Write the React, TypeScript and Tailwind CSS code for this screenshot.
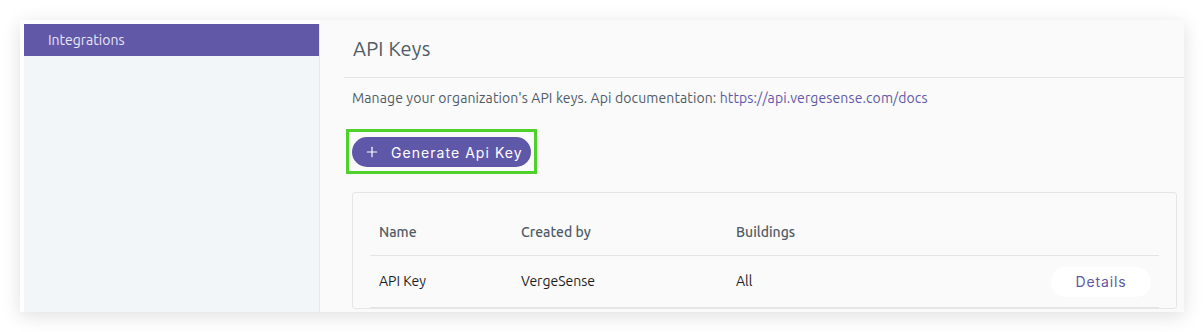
import { Plus } from "lucide-react";

const body = "font-['Ubuntu','Noto_Sans','Open_Sans',sans-serif]";
const geo = "font-['Inter','DejaVu_Sans',sans-serif]";

export default function App() {
  return (
    <div className={`h-[332px] w-[1204px] overflow-hidden bg-white pl-5 pt-5 ${body}`}>
      <div className="flex h-[292px] w-[1164px] bg-white shadow-[0_4px_18px_rgba(0,0,0,0.13)]">
        {/* sidebar */}
        <div className="w-[300px] shrink-0 pl-1 pt-1">
          <div className="h-full border-r border-[#e6e9ec] bg-[#f3f6f8]">
            <div className="flex h-8 items-center bg-[#6159a8] pl-6 text-[14px] text-[#e9e7f7]">
              Integrations
            </div>
          </div>
        </div>

        {/* main */}
        <div className="flex-1 overflow-hidden bg-[#fafafa]">
          <div className="ml-6 flex h-[58px] items-center border-b border-[#e4e4e4] pl-2">
            <h1 className="pl-px text-[20px] tracking-[0.01em] text-[#4f5b66]">API Keys</h1>
          </div>
          <p className="mt-[10px] pl-8 text-[14px] leading-5 tracking-[0.008em] text-[#4f5b66]">
            Manage your organization's API keys. Api documentation:{" "}
            <a className="text-[#5f58a8]">https://api.vergesense.com/docs</a>
          </p>

          <div className="ml-[26px] mt-[21px] inline-flex border-[3px] border-[#4fd12c] px-[3px] pb-[4px] pt-[5px]">
            <button
              className={`flex h-[30px] w-[179px] items-center gap-[11px] rounded-full bg-[#5f57a7] pl-3 text-[14px] tracking-[0.075em] text-white ${geo}`}
            >
              <Plus size={16} strokeWidth={1.8} />
              Generate Api Key
            </button>
          </div>

          {/* table card */}
          <div className="ml-8 mr-[7px] mt-[18px] rounded-[3px] border border-[#e6e6e6] bg-[#fafafa] px-[17px] pt-[16px]">
            <div className="grid h-[47px] grid-cols-[142px_215px_1fr] items-center border-b border-[#e4e4e4] pl-[9px] text-[14px] font-medium text-[#4f5b66]">
              <span>Name</span>
              <span>Created by</span>
              <span>Buildings</span>
            </div>
            <div className="grid h-[52px] grid-cols-[142px_215px_1fr_auto] items-center border-b border-[#e4e4e4] pl-[9px] pr-2 text-[14px] text-[#1d1d1f]">
              <span>API Key</span>
              <span>VergeSense</span>
              <span>All</span>
              <button
                className={`h-[30px] w-[100px] rounded-full bg-white text-[14px] tracking-[0.06em] text-[#5f57a7] ${geo}`}
              >
                Details
              </button>
            </div>
          </div>
        </div>
      </div>
    </div>
  );
}
